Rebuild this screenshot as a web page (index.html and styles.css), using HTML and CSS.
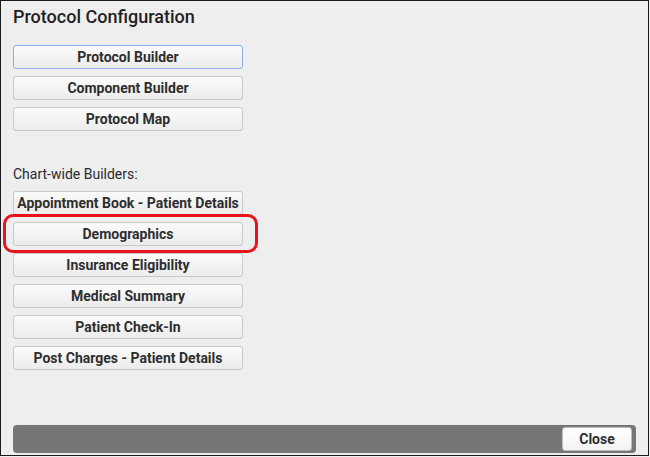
FILE: index.html
```html
<!DOCTYPE html>
<html>
<head>
<meta charset="utf-8">
<link rel="stylesheet" href="styles.css">
</head>
<body>
<div class="dialog">
  <h1 class="title">Protocol Configuration</h1>
  <div class="btn-group">
    <button class="btn btn-focus">Protocol Builder</button>
    <button class="btn">Component Builder</button>
    <button class="btn">Protocol Map</button>
  </div>
  <div class="section-label">Chart-wide Builders:</div>
  <div class="btn-group">
    <button class="btn">Appointment Book - Patient Details</button>
    <button class="btn">Demographics</button>
    <button class="btn">Insurance Eligibility</button>
    <button class="btn">Medical Summary</button>
    <button class="btn">Patient Check-In</button>
    <button class="btn">Post Charges - Patient Details</button>
  </div>
  <div class="footer">
    <button class="btn btn-close">Close</button>
  </div>
  <div class="highlight"></div>
</div>
</body>
</html>
```
FILE: styles.css
```css
html, body {
  margin: 0;
  padding: 0;
  background: #eeeeee;
}
body {
  font-family: Roboto, "Liberation Sans", Arial, sans-serif;
  color: #222;
}
.dialog {
  position: relative;
  box-sizing: border-box;
  width: 649px;
  height: 456px;
  border: 1px solid #1a1a1a;
  background: #eeeeee;
  padding: 0 12px 2px 12px;
  display: flex;
  flex-direction: column;
}
.title {
  margin: 5px 0 0 0;
  font-size: 18px;
  font-weight: 500;
  line-height: 21px;
  color: #1f1f1f;
}
.btn-group {
  display: flex;
  flex-direction: column;
  gap: 7px;
  align-items: flex-start;
}
.title + .btn-group {
  margin-top: 18px;
}
.btn {
  box-sizing: border-box;
  width: 230px;
  height: 24px;
  padding: 0 2px;
  border: 1px solid #c8c8c8;
  border-radius: 3px;
  background: linear-gradient(#fbfbfb, #ececec);
  font-family: Roboto, "Liberation Sans", Arial, sans-serif;
  font-size: 14px;
  font-weight: 700;
  color: #2e2e2e;
  text-align: center;
  white-space: nowrap;
}
.btn-focus {
  border-color: #8ab0ea;
}
.section-label {
  margin-top: 35px;
  font-size: 14px;
  line-height: 17px;
  color: #2a2a2a;
  margin-bottom: 8px;
}
.footer {
  margin-top: auto;
  height: 28px;
  background: #767676;
  border-radius: 4px;
  display: flex;
  justify-content: flex-end;
  align-items: center;
  padding-right: 4px;
}
.btn-close {
  width: 70px;
  background: linear-gradient(#ffffff, #f3f3f3);
  border-color: #bdbdbd;
}
.highlight {
  position: absolute;
  left: 2px;
  top: 213px;
  width: 249px;
  height: 33px;
  border: 3px solid #e8141c;
  border-radius: 10px;
  pointer-events: none;
}
```
